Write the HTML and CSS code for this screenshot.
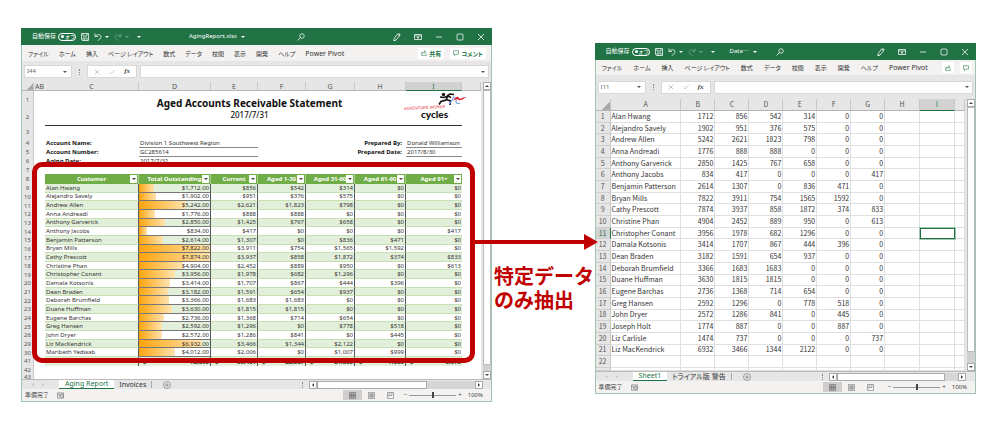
FILE: index.html
```html
<!DOCTYPE html>
<html lang="ja">
<head>
<meta charset="utf-8">
<title>AgingReport.xlsx</title>
<link rel="stylesheet" href="styles.css">
</head>
<body>
<svg class="defs" aria-hidden="true">
  <symbol id="save" viewBox="0 0 16 16"><path d="M1 1h14v14H3l-2-2zM4 1v5h8V1M4 15v-5h8v5M7 15v-3"/></symbol>
  <symbol id="undo" viewBox="0 0 16 16"><path d="M2 1v6h6M2 7C6 2 14 2 14 8c0 3-3 4-7 8"/></symbol>
  <symbol id="redo" viewBox="0 0 16 16"><path d="M14 1v6H8M14 7C10 2 2 2 2 8c0 3 3 4 7 8"/></symbol>
  <symbol id="search" viewBox="0 0 16 16"><circle cx="10" cy="6" r="4.5"/><path d="M7 9l-6 6"/></symbol>
  <symbol id="pen" viewBox="0 0 16 16"><path d="M2 12L9 2h5l-1 4-7 8-4 1zM9 2l4 4M1 15h4"/></symbol>
  <symbol id="ribbon" viewBox="0 0 16 16"><path d="M1 3h14v10H1zM1 6h14M8 12V8M6 10l2-2 2 2"/></symbol>
  <symbol id="min" viewBox="0 0 16 16"><path d="M2 8h12"/></symbol>
  <symbol id="max" viewBox="0 0 16 16"><rect x="2" y="2" width="12" height="12" rx="2"/></symbol>
  <symbol id="close" viewBox="0 0 16 16"><path d="M2 2l12 12M14 2L2 14"/></symbol>
  <symbol id="check" viewBox="0 0 16 16"><path d="M1 9l4 4L15 3"/></symbol>
  <symbol id="share" viewBox="0 0 16 16"><path d="M5 6H2v9h12V9M4 11c1-4 4-6 8-6M8 1l5 4-5 4"/></symbol>
  <symbol id="note" viewBox="0 0 16 16"><path d="M1 2h14v9H8l-4 4v-4H1z"/></symbol>
  <symbol id="plus" viewBox="0 0 16 16"><circle cx="8" cy="8" r="7"/><path d="M4 8h8M8 4v8"/></symbol>
  <symbol id="macro" viewBox="0 0 16 16"><path d="M1 2h14v12H1zM1 5h14M4 8h5M4 11h3"/><circle cx="11" cy="10" r="3"/></symbol>
  <symbol id="normal" viewBox="0 0 16 16"><path d="M1 1h14v14H1zM1 5h14M1 8h14M1 11h14M5 1v14M10 1v14"/></symbol>
  <symbol id="layout" viewBox="0 0 16 16"><path d="M1 1h14v14H1zM4 4h8v8H4zM5 6h6M5 8h6M5 10h6"/></symbol>
  <symbol id="break" viewBox="0 0 16 16"><path d="M1 1h14v14H1zM5 1v7h6V1M1 8h4"/></symbol>
</svg>

<main class="stage">
  <section class="window report" aria-label="AgingReport.xlsx">
    <header class="titlebar">
      <div class="quick">
        <span class="autosave">自動保存</span>
        <button class="toggle"><i></i>オフ</button>
        <svg class="icon"><use href="#save"/></svg>
        <svg class="icon"><use href="#undo"/></svg><b class="caret"></b>
        <svg class="icon dim"><use href="#redo"/></svg><b class="caret dim"></b>
        <b class="caret more"></b>
      </div>
      <div class="doc">AgingReport.xlsx <b class="caret"></b></div>
      <svg class="icon find"><use href="#search"/></svg>
      <div class="controls">
        <svg class="icon"><use href="#pen"/></svg>
        <svg class="icon"><use href="#ribbon"/></svg>
        <svg class="icon"><use href="#min"/></svg>
        <svg class="icon"><use href="#max"/></svg>
        <svg class="icon"><use href="#close"/></svg>
      </div>
    </header>
    <nav class="menu">
      <button>ファイル</button><button>ホーム</button><button>挿入</button><button>ページ レイアウト</button><button>数式</button><button>データ</button><button>校閲</button><button>表示</button><button>開発</button><button>ヘルプ</button><button class="latin">Power Pivot</button>
      <span class="actions">
        <button class="action"><svg class="icon"><use href="#share"/></svg>共有</button>
        <button class="action"><svg class="icon"><use href="#note"/></svg>コメント</button>
      </span>
    </nav>
    <div class="formula">
      <div class="namebox"><input aria-label="名前ボックス" value="I44"><b class="caret"></b></div>
      <span class="grip"></span>
      <div class="fx"><svg class="icon"><use href="#close"/></svg><svg class="icon"><use href="#check"/></svg><em>fx</em></div>
      <div class="entry"><input aria-label="数式バー"><b class="caret"></b></div>
    </div>
    <div class="sheet">
      <table class="grid">
        <thead>
          <tr class="cols"><th class="corner"></th><th>AB</th><th>C</th><th>D</th><th>E</th><th>F</th><th>G</th><th>H</th><th class="picked">I</th><th></th></tr>
        </thead>
        <tbody class="head">
          <tr class="tall"><th>1</th><td></td><td class="wide title">Aged Accounts Receivable Statement</td><td></td></tr>
          <tr class="mid"><th>2</th><td></td><td class="wide date">2017/7/31</td><td></td></tr>
          <tr class="gap"><th>3</th></tr>
          <tr class="info"><th>4</th><td></td><td class="label">Account Name:</td><td class="line two">Division 1 Southwest Region</td><td class="label right three">Prepared By:</td><td class="line">Donald Williamson</td></tr>
          <tr class="info"><th>5</th><td></td><td class="label">Account Number:</td><td class="line two">GC285614</td><td class="label right three">Prepared Date:</td><td class="line">2017/8/30</td></tr>
          <tr class="info"><th>6</th><td></td><td class="label">Aging Date:</td><td class="line two">2017/7/31</td></tr>
          <tr class="low"><th>7</th></tr>
          <tr class="fields"><th>8</th><td></td>
            <td class="field">Customer<button aria-label="絞り込み"><b class="caret"></b></button></td>
            <td class="field">Total Outstanding<button aria-label="絞り込み"><b class="caret"></b></button></td>
            <td class="field">Current<button aria-label="絞り込み"><b class="caret"></b></button></td>
            <td class="field">Aged 1-30<button aria-label="絞り込み"><b class="caret"></b></button></td>
            <td class="field">Aged 31-60<button aria-label="絞り込み"><b class="caret"></b></button></td>
            <td class="field">Aged 61-90<button aria-label="絞り込み"><b class="caret"></b></button></td>
            <td class="field">Aged 91+<button aria-label="絞り込み"><b class="caret"></b></button></td>
          </tr>
        </tbody>
        <tbody class="accounts" id="accounts"></tbody>
        <tbody>
          <tr class="total"><th>41</th><td></td><td></td><td><span>$</span>72,890</td><td><span>$</span>36,461</td><td><span>$</span>22,387</td><td><span>$</span>21,806</td><td><span>$</span>7,653</td><td><span>$</span>3,073</td></tr>
          <tr class="info"><th>42</th></tr>
          <tr class="cut"><th>43</th></tr>
        </tbody>
      </table>
      <div class="vscroll"><button aria-label="上へ"><b class="caret up"></b></button><div class="thumb"></div><div class="track"></div><button aria-label="下へ"><b class="caret"></b></button></div>
      <svg class="logo" viewBox="0 0 66 30" role="img" aria-label="Adventure Works Cycles">
        <circle cx="40.5" cy="3.5" r="1.7" fill="#111"/>
        <path d="M37 6l4 .5 4-1.5 3 1.500M44 5l3-2 4 .5M44.500 5.500L43 9l-5 1.500-2 3M43.500 8.500l4 1.500-.5 4" fill="none" stroke="#111" stroke-width="1.6"/>
        <path d="M46 13c2-1 3-4 4-6s3 0 3 3 2 3 4 2" fill="none" stroke="#7aa5e6" stroke-width="1.3"/>
        <path d="M50 10c3-5 5-5 6-3s4-1 8-1c-3 1-5 4-8 3-2-1-3-1-6 1z" fill="#e3202b"/>
        <text x="1" y="19" class="logo-top" transform="rotate(-3 1 19)">ADVENTURE WORKS</text>
        <text x="18" y="27" class="logo-main">cycles</text>
      </svg>
    </div>
    <footer class="tabs">
      <span class="step">‹</span><span class="step">›</span>
      <button class="tab active">Aging Report</button><button class="tab">Invoices</button><i class="divider"></i>
      <svg class="icon add"><use href="#plus"/></svg>
      <div class="hscroll"><span class="grip"></span><button aria-label="左へ"><b class="caret left"></b></button><div class="thumb"></div><div class="track"></div><button aria-label="右へ"><b class="caret next"></b></button></div>
    </footer>
    <footer class="status">
      <span>準備完了</span><svg class="icon macro"><use href="#macro"/></svg>
      <div class="views"><span class="view on"><svg class="icon"><use href="#normal"/></svg></span><span class="view"><svg class="icon"><use href="#layout"/></svg></span><span class="view"><svg class="icon"><use href="#break"/></svg></span>
      <span class="minus">−</span><input type="range" aria-label="ズーム" value="50"><span>+</span><span class="zoom">100%</span></div>
    </footer>
    <div class="callout"></div>
  </section>

  <aside class="link">
    <div class="arrow"><i></i><svg viewBox="0 0 14 16"><path d="M0 0l14 8-14 8z"/></svg></div>
    <p>特定データ<br>のみ抽出</p>
  </aside>

  <section class="window data" aria-label="Data">
    <header class="titlebar">
      <div class="quick">
        <span class="autosave">自動保存</span>
        <button class="toggle"><i></i>オフ</button>
        <svg class="icon"><use href="#save"/></svg>
        <svg class="icon"><use href="#undo"/></svg><b class="caret"></b>
        <svg class="icon dim"><use href="#redo"/></svg><b class="caret dim"></b>
        <b class="caret more"></b>
      </div>
      <div class="doc">Data⋯ <b class="caret"></b></div>
      <svg class="icon find"><use href="#search"/></svg>
      <div class="controls">
        <svg class="icon"><use href="#pen"/></svg>
        <svg class="icon"><use href="#ribbon"/></svg>
        <svg class="icon"><use href="#min"/></svg>
        <svg class="icon"><use href="#max"/></svg>
        <svg class="icon"><use href="#close"/></svg>
      </div>
    </header>
    <nav class="menu">
      <button>ファイル</button><button>ホーム</button><button>挿入</button><button>ページ レイアウト</button><button>数式</button><button>データ</button><button>校閲</button><button>表示</button><button>開発</button><button>ヘルプ</button><button class="latin">Power Pivot</button>
      <span class="actions">
        <button class="action" aria-label="共有"><svg class="icon"><use href="#share"/></svg></button>
        <button class="action" aria-label="コメント"><svg class="icon"><use href="#note"/></svg></button>
      </span>
    </nav>
    <div class="formula">
      <div class="namebox"><input aria-label="名前ボックス" value="I11"><b class="caret"></b></div>
      <span class="grip"></span>
      <div class="fx"><svg class="icon"><use href="#close"/></svg><svg class="icon"><use href="#check"/></svg><em>fx</em></div>
      <div class="entry"><input aria-label="数式バー"><b class="caret"></b></div>
    </div>
    <div class="sheet">
      <table class="grid">
        <thead>
          <tr class="cols"><th class="corner"></th><th>A</th><th>B</th><th>C</th><th>D</th><th>E</th><th>F</th><th>G</th><th>H</th><th class="picked">I</th><th></th></tr>
        </thead>
        <tbody class="extract" id="extract"></tbody>
        <tbody><tr class="cut"><th></th><td></td><td></td><td></td><td></td><td></td><td></td><td></td><td></td><td></td><td></td></tr></tbody>
      </table>
      <div class="vscroll"><button aria-label="上へ"><b class="caret up"></b></button><div class="thumb"></div><div class="track"></div><button aria-label="下へ"><b class="caret"></b></button></div>
    </div>
    <footer class="tabs">
      <span class="step">‹</span><span class="step">›</span>
      <button class="tab active">Sheet1</button><button class="tab">トライアル版 警告</button><i class="divider"></i>
      <svg class="icon add"><use href="#plus"/></svg>
      <div class="hscroll"><span class="grip"></span><button aria-label="左へ"><b class="caret left"></b></button><div class="thumb"></div><div class="track"></div><button aria-label="右へ"><b class="caret next"></b></button></div>
    </footer>
    <footer class="status">
      <span>準備完了</span><svg class="icon macro"><use href="#macro"/></svg>
      <div class="views"><span class="view on"><svg class="icon"><use href="#normal"/></svg></span><span class="view"><svg class="icon"><use href="#layout"/></svg></span><span class="view"><svg class="icon"><use href="#break"/></svg></span>
      <span class="minus">−</span><input type="range" aria-label="ズーム" value="50"><span>+</span><span class="zoom">100%</span></div>
    </footer>
  </section>
</main>
<script src="script.js"></script>
</body>
</html>
```
FILE: styles.css
```css
* { box-sizing: border-box; }
body { margin: 0; background: #fff; color: #333; font: 6px/9px "Noto Sans", "Noto Sans CJK JP", sans-serif; }
button, input { font: inherit; color: inherit; border: 0; padding: 0; margin: 0; background: none; }
input { min-width: 0; outline: 0; }
.defs { position: absolute; width: 0; height: 0; }
.icon { width: 8px; height: 8px; flex: none; fill: none; stroke: currentColor; stroke-width: 1.5; }
.dim { opacity: .35; }
.caret { width: 0; height: 0; flex: none; border: 2px solid transparent; border-top: 2px solid currentColor; border-bottom: 0; }
.caret.up { border-top: 0; border-bottom: 2px solid currentColor; }
.caret.left { border: 2px solid transparent; border-right: 2px solid currentColor; border-left: 0; }
.caret.next { border: 2px solid transparent; border-left: 2px solid currentColor; border-right: 0; }

.stage { display: flex; align-items: flex-start; padding: 28px 24px 20px 21px; }
.window { position: relative; min-width: 0; background: #e6e6e6; border: 1px solid #9fc5b0; border-top: 0; }
.report { flex: 471 1 0; }
.data { flex: 381 1 0; margin-top: 15px; }
.link { flex: 103 1 0; position: relative; min-width: 0; }

.titlebar { display: flex; align-items: center; height: 17px; margin: 0 -1px; padding: 0 7px 0 11px; background: #217346; color: #fff; }
.quick { display: flex; align-items: center; flex: none; }
.quick .icon { margin-left: 5px; }
.quick .caret { margin-left: 3px; }
.quick .more { margin-left: 8px; }
.toggle { display: flex; align-items: center; gap: 1px; width: 18px; height: 8px; margin-left: 2px; padding-left: 2px; border: 1px solid #fff; border-radius: 4px; font-size: 5px; line-height: 6px; }
.toggle i { width: 3px; height: 3px; flex: none; border-radius: 50%; background: #fff; }
.doc { display: flex; align-items: center; gap: 4px; }
.report .doc { margin-left: 48px; }
.data .doc { margin-left: 15px; }
.report .find { margin-left: 52px; }
.data .find { margin-left: 19px; }
.controls { display: flex; gap: 13px; margin-left: auto; }

.menu { display: flex; align-items: center; gap: 10px; height: 16px; padding-left: 6px; background: #f3f2f1; white-space: nowrap; font-family: "Noto Sans CJK JP", sans-serif; font-feature-settings: "palt"; }
.data .menu { gap: 11px; }
.menu .latin { font: 7px/9px "Noto Sans", sans-serif; }
.actions { display: flex; gap: 6px; margin-left: auto; padding-right: 5px; color: #217346; }
.data .actions { padding-right: 3px; }
.action { display: flex; align-items: center; justify-content: center; gap: 2px; height: 11px; padding: 0 3px; background: #fff; font-weight: 700; }
.action .icon { width: 6px; height: 6px; }

.formula { display: flex; align-items: center; height: 21px; padding: 0 2px; }
.namebox, .fx, .entry { display: flex; align-items: center; height: 13px; background: #fff; border: 1px solid #d8d8d8; }
.namebox { flex: none; width: 48px; padding: 0 4px 0 2px; color: #666; }
.namebox input { flex: 1; }
.namebox .caret, .entry .caret { color: #555; }
.grip { width: 1px; height: 6px; flex: none; border-left: 1px dotted #888; }
.formula .grip { margin: 0 7px; }
.fx { flex: none; justify-content: space-between; width: 50px; padding: 0 6px; color: #999; }
.fx .icon { width: 6px; height: 6px; }
.fx em { color: #444; font: italic 700 7px/9px "Liberation Serif", serif; }
.entry { flex: 1; min-width: 0; margin-left: 3px; padding-right: 3px; }
.entry input { flex: 1; }

.sheet { position: relative; display: flex; background: #fff; }
.grid { display: block; flex: 1; min-width: 0; overflow: hidden; }
.grid thead, .grid tbody { display: grid; }
.grid tr { display: grid; min-height: 0; }
.report .grid tr { grid-template-columns: 12fr 11fr 94fr 72fr 47fr 48fr 49fr 51fr 56fr 19fr; }
.data .grid tr { grid-template-columns: 15fr 71fr 34fr 34fr 34fr 34fr 34fr 34fr 35fr 35fr 10fr; }
.grid th, .grid td { display: flex; align-items: center; min-width: 0; min-height: 0; padding: 0; white-space: nowrap; }
.grid th { justify-content: center; background: #e6e6e6; color: #555; font-weight: 400; border-right: 1px solid #c8c8c8; }
.grid .cols { height: 9px; font-size: 7px; }
.grid .cols th { border-bottom: 1px solid #b5b5b5; }
.grid .cols .picked { background: #d2d2d2; border-bottom: 1px solid #217346; color: #217346; }
.grid .cols .corner { background: linear-gradient(135deg, #e6e6e6 65%, #aaa 65%); }
.report .cols th:nth-child(2) { border-right: 0; }

.tall { height: 18px; }
.mid { height: 17px; }
.gap { height: 13px; }
.info { height: 9px; }
.low { height: 8px; }
.cut { height: 4px; overflow: hidden; }
.report .grid .wide { grid-column: 3 / 10; justify-content: center; color: #111; padding-right: 8px; }
.report .grid .title { align-items: flex-end; font-size: 10px; line-height: 12px; font-weight: 700; }
.report .grid .date { align-items: flex-start; border-bottom: 1px solid #333; font-size: 8px; line-height: 11px; font-weight: 500; }
.report .grid .label { padding-left: 1px; font-weight: 700; color: #111; }
.report .grid .line { padding-left: 1px; border-bottom: 1px solid #888; }
.two { grid-column: span 2; }
.three { grid-column: span 3; }
.report .grid .right { justify-content: flex-end; padding-right: 4px; }

.fields { height: 10px; }
.report .grid .field { position: relative; justify-content: center; background: #70ad47; color: #fff; font-weight: 700; border-right: 1px solid #a9d08e; }
.report .grid .field:last-child { border-right: 0; }
.field button { position: absolute; right: 1px; top: 1px; display: flex; align-items: center; justify-content: center; width: 7px; height: 8px; background: #fff; color: #444; }
.accounts { height: 173px; grid-auto-rows: 1fr; line-height: 8px; }
.report .accounts .cell { padding-left: 1px; border-bottom: 1px solid #c6e0b4; border-right: 1px solid #555; }
.report .accounts .cell.last { border-right: 0; }
.report .accounts .cell.sum { border-bottom-color: #777; }
.report .accounts .money, .report .total td { justify-content: flex-end; padding-right: 1px; }
.report .accounts tr:nth-child(odd) .cell { background: #e2efda; }
.report .accounts .sum { position: relative; }
.bar { position: absolute; left: 0; top: 0; bottom: 0; background: linear-gradient(90deg, #ffa40d, #ffe4b0); }
.sum span { position: relative; }
.total { height: 9px; }
.report .total td { align-items: flex-end; line-height: 7px; }
.report .total td:nth-child(n+3) { background: #e2efda; font-weight: 700; border-right: 1px solid #555; }
.report .total td:nth-child(3) { border-right-color: #555; }
.report .total td:last-child { border-right: 0; }
.report .total td span { margin: 0 auto 0 4px; }

.data .menu { height: 15px; }
.data .formula { height: 24px; }
.data .grid { font: 7px/9px "Noto Sans CJK JP", sans-serif; }
.data .grid .cols { height: 12px; }
.extract { height: 257px; grid-auto-rows: 1fr; }
.data td { border-right: 1px solid #e0e0e0; border-bottom: 1px solid #e0e0e0; }
.data .extract td { padding-left: 1px; }
.data tbody th { border-bottom: 1px solid #cfcfcf; }
.data .extract .num { justify-content: flex-end; padding-right: 1px; }
.data .grid .current { background: #d2d2d2; color: #217346; border-right-color: #217346; }
.data .extract .selected { border: 1px solid #217346; box-shadow: 0 0 0 1px #9fc5b0; z-index: 1; }
.data .cut { height: 3px; }

.vscroll { display: flex; flex-direction: column; flex: none; width: 10px; padding-left: 2px; background: #e6e6e6; }
.vscroll button, .hscroll button { display: flex; align-items: center; justify-content: center; flex: none; width: 8px; height: 8px; background: #fff; border: 1px solid #aaa; color: #444; }
.vscroll .thumb { flex: 275; background: #fff; border: 1px solid #bbb; }
.vscroll .track { flex: 6; background: #d0d0d0; }
.data .vscroll .thumb { flex: 245; }
.data .vscroll .track { flex: 11; }

.tabs { display: flex; align-items: center; height: 10px; border-top: 1px solid #bbb; }
.step { width: 10px; text-align: center; color: #888; }
.step:first-child { margin-left: 6px; }
.tab { height: 9px; padding: 0 5px; font: 7px/8px "Noto Sans", "Noto Sans CJK JP", sans-serif; white-space: nowrap; font-feature-settings: "palt"; }
.tab.active { margin-left: 11px; padding: 0 6px; background: #fff; color: #217346; border-bottom: 1px solid #217346; }
.divider { width: 1px; height: 7px; background: #aaa; }
.add { margin-left: 11px; stroke-width: 1; color: #555; }
.hscroll { display: flex; align-items: center; width: 181px; height: 8px; margin-left: auto; margin-right: 8px; }
.data .hscroll { width: 144px; margin-right: 9px; }
.hscroll .grip { margin-right: 6px; }
.hscroll .thumb { flex: 109; height: 8px; background: #fff; border: 1px solid #aaa; }
.hscroll .track { flex: 49; height: 8px; background: #d6d6d6; }
.data .hscroll .track { flex: 13; }

.status { display: flex; align-items: center; height: 12px; padding: 0 8px 0 3px; background: #f3f2f1; color: #444; }
.macro { width: 7px; height: 7px; margin-left: 8px; stroke-width: 1; }
.views { display: flex; align-items: center; margin-left: auto; }
.view { display: flex; align-items: center; justify-content: center; width: 19px; height: 10px; }
.view .icon { width: 7px; height: 7px; stroke-width: 1; }
.view.on { background: #d0cecc; }
.minus { margin-left: 4px; }
.data .minus { margin-left: 8px; }
.views input { appearance: none; width: 47px; height: 9px; margin: 0 2px; background: linear-gradient(#999, #999) center / 100% 1px no-repeat; }
.views input::-webkit-slider-thumb { appearance: none; width: 2px; height: 6px; background: #444; }
.zoom { margin-left: 6px; }

.callout { position: absolute; left: 10px; right: 16px; top: 134px; bottom: 38px; border: 5px solid #c00000; border-radius: 10px; }
.arrow { position: absolute; z-index: 1; left: -18px; right: -3px; top: 206px; display: flex; align-items: center; }
.arrow i { flex: 1; height: 4px; background: #c00000; }
.arrow svg { flex: none; width: 14px; height: 16px; fill: #c00000; }
.link p { margin: 236px 0 0 2px; color: #c00000; font: 700 20px/24px "Noto Sans CJK JP", sans-serif; white-space: nowrap; }

.logo { position: absolute; right: 22px; top: 9px; width: 66px; height: 30px; }
.logo-top { font: italic 4px "Liberation Sans", sans-serif; fill: #e3202b; }
.logo-main { font: 900 10px Lato, sans-serif; fill: #111; }
```
FILE: script.js
```js
// Customer, total outstanding, current, 1-30, 31-60, 61-90, 91+
const shared = [
  ["Alan Hwang", 1712, 856, 542, 314, 0, 0],
  ["Alejandro Savely", 1902, 951, 376, 575, 0, 0],
  ["Andrew Allen", 5242, 2621, 1823, 798, 0, 0],
  ["Anna Andreadi", 1776, 888, 888, 0, 0, 0],
  ["Anthony Garverick", 2850, 1425, 767, 658, 0, 0],
  ["Anthony Jacobs", 834, 417, 0, 0, 0, 417],
  ["Benjamin Patterson", 2614, 1307, 0, 836, 471, 0],
  ["Bryan Mills", 7822, 3911, 754, 1565, 1592, 0],
  ["Cathy Prescott", 7874, 3937, 858, 1872, 374, 833],
  ["Christine Phan", 4904, 2452, 889, 950, 0, 613],
  ["Christopher Conant", 3956, 1978, 682, 1296, 0, 0],
  ["Damala Kotsonis", 3414, 1707, 867, 444, 396, 0],
  ["Dean Braden", 3182, 1591, 654, 937, 0, 0],
  ["Deborah Brumfield", 3366, 1683, 1683, 0, 0, 0],
  ["Duane Huffman", 3630, 1815, 1815, 0, 0, 0],
  ["Eugene Barchas", 2736, 1368, 714, 654, 0, 0],
  ["Greg Hansen", 2592, 1296, 0, 778, 518, 0],
  ["John Dryer", 2572, 1286, 841, 0, 445, 0]
];
const liz = ["Liz MacKendrick", 6932, 3466, 1344, 2122, 0, 0];
const report = [...shared, liz, ["Maribeth Yedwab", 4012, 2006, 0, 1007, 999, 0]];
const extract = [...shared, ["Joseph Holt", 1774, 887, 0, 0, 887, 0], ["Liz Carlisle", 1474, 737, 0, 0, 0, 737], liz];

const largest = Math.max(...report.map(row => row[1]));
const money = n => "$" + n.toLocaleString("en-US");

document.getElementById("accounts").innerHTML = report.map(([name, total, ...rest], i) => {
  const number = i < 18 ? i + 9 : i + 11;
  const cells = rest.map((n, k) => `<td class="cell money${k === 4 ? " last" : ""}">${money(n)}</td>`).join("");
  return `<tr><th>${number}</th><td></td><td class="cell">${name}</td>` +
    `<td class="cell money sum"><i class="bar" style="width:${total / largest * 100}%"></i><span>${money(total)}.00</span></td>${cells}</tr>`;
}).join("");

document.getElementById("extract").innerHTML = Array.from({ length: 22 }, (_, i) => {
  const row = extract[i] || [];
  let cells = "";
  for (let c = 0; c < 10; c++) {
    const kind = (c > 0 ? "num" : "") + (i === 10 && c === 8 ? " selected" : "");
    cells += `<td class="${kind}">${row[c] ?? ""}</td>`;
  }
  return `<tr><th${i === 10 ? ' class="current"' : ""}>${i + 1}</th>${cells}</tr>`;
}).join("");
```
